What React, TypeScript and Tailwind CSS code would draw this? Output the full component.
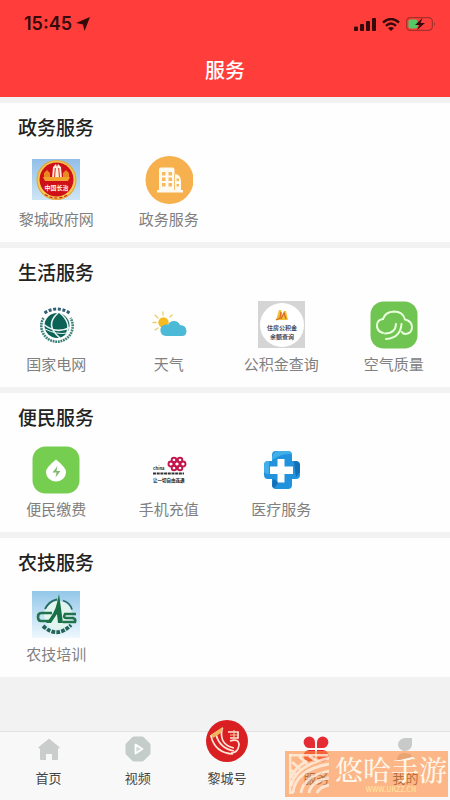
import type { ReactNode } from "react";

type Service = {
  name: string;
  icon: ReactNode;
};

type ServiceGroup = {
  title: string;
  services: Service[];
};

type Tab = {
  name: string;
  icon: ReactNode;
};

function SealIcon() {
  return (
    <svg viewBox="0 0 48 48" className="size-12" aria-hidden="true">
      <defs>
        <linearGradient id="sealSky" x1="0" y1="0" x2="0" y2="1">
          <stop offset="0" stopColor="#92bfe8" />
          <stop offset="1" stopColor="#cde5f6" />
        </linearGradient>
      </defs>
      <rect y="3" width="48" height="41" fill="url(#sealSky)" />
      <circle cx="24.500" cy="24" r="20" fill="#e8a63c" />
      <circle cx="24.500" cy="24" r="18.800" fill="#f5cf52" />
      <circle cx="24.500" cy="23.500" r="17" fill="#cf1018" />
      <path d="M12 22v-5l3-3 3 3v5zM31 22v-5l3-3 3 3v5z" fill="#e98a20" />
      <path d="M20 23l1-12 3-3 1 3 1-3 3 3 1 12z" fill="#fff0dc" />
      <path d="M22.500 22l.8-10M27.500 22l-.8-10" stroke="#d62a20" strokeWidth="1" />
      <path d="M11 21h27l-2 4H13z" fill="#f3a22d" />
      <text x="24.500" y="33.500" fontSize="6" fontWeight="700" textAnchor="middle" fill="#fff3e0">中国长治</text>
      <path d="M13 38.500q11.500 7 23 0" fill="none" stroke="#cf2018" strokeWidth="1.200" strokeDasharray="3 2" />
    </svg>
  );
}

function BuildingIcon() {
  return (
    <svg viewBox="0 0 48 48" className="size-12" aria-hidden="true">
      <circle cx="24.500" cy="24" r="24" fill="#f6b04e" />
      <path d="M14 34V13.500q0-2 2-2h11.500q2 0 2 2V18q6 0 6.500 7v9h2v2.500H12V34z" fill="#fffaf0" />
      <path d="M29.500 18v16" stroke="#f6b04e" strokeWidth=".8" />
      <path d="M17 16h3.500v3.500H17zM23.500 16H27v3.500h-3.500zM17 21.500h3.500V25H17zM23.500 21.500H27V25h-3.500zM17 27h3.500v3.500H17zM23.500 27H27v3.500h-3.500zM31.500 22.500h2.500V25h-2.500zM31.500 28h2.500v2.500h-2.500z" fill="#f6b95f" />
    </svg>
  );
}

function StateGridIcon() {
  return (
    <svg viewBox="0 0 48 48" className="size-12" aria-hidden="true">
      <circle cx="25" cy="24.500" r="12.500" fill="#0d6257" />
      <path d="M11.500 17a15.700 15.700 0 1 0 27 0" fill="none" stroke="#3b7f76" strokeWidth="2.600" strokeDasharray="1.800 .8" />
      <path d="M12.500 12Q25 4 37.500 12" fill="none" stroke="#315f77" strokeWidth="3" strokeDasharray="3 1.700" />
      <path d="M26 12q-14 12 2 25M28 12q12 10 6 22M12 23.500q12 10 26 3" fill="none" stroke="#e7f3ef" strokeWidth="1.600" />
      <path d="M13 28q12 6 22 4" fill="none" stroke="#e7f3ef" strokeWidth="1" />
    </svg>
  );
}

function WeatherIcon() {
  return (
    <svg viewBox="0 0 48 48" className="size-12" aria-hidden="true">
      <path d="M18 11v3M10 14l3 3M27 14l-2 2M8 21.500h3M10 29l3-2" stroke="#e9cf63" strokeWidth="1.300" strokeLinecap="round" />
      <circle cx="18.500" cy="21.500" r="5.200" fill="#f5bb20" />
      <path d="M21 35a5.700 5.700 0 0 1-2-11q2-1 4 0a6.500 6.500 0 0 1 12 0q6 0 6.500 6 0 5-4.500 5z" fill="#4cb9d6" />
    </svg>
  );
}

function FundIcon() {
  return (
    <svg viewBox="0 0 48 48" className="size-12" aria-hidden="true">
      <rect x="1" width="47" height="47" fill="#d5d5d5" />
      <circle cx="25" cy="24" r="22" fill="#fff" />
      <path d="M19 19l3-10h2l2 6 1-5h2l2 9z" fill="#f2c133" />
      <path d="M19 19l4-2 1-6M24 18l3-6 2 6" fill="none" stroke="#d96b2b" strokeWidth="1.300" />
      <text x="25" y="29" fontSize="6" fontWeight="700" textAnchor="middle" fill="#444a5c">住房公积金</text>
      <text x="25" y="38" fontSize="6" fontWeight="700" textAnchor="middle" fill="#444a5c">余额查询</text>
    </svg>
  );
}

function AirIcon() {
  return (
    <svg viewBox="0 0 48 48" className="size-12" aria-hidden="true">
      <rect width="47" height="47" x=".500" y=".500" rx="13" fill="#70c451" />
      <g fill="none" stroke="#eaffdf" strokeWidth="2" strokeLinecap="round">
        <path d="M13 32q-6.500-2-6-8 .500-5.500 6-6 2-7 11-7.500 9 0 11 8 7 1.500 7 8-.500 6-6.500 6.500-2.500 0-3.500-2" />
        <path d="M15 32.500q10.500 0 11-9.500M16 38q14.500-1 15.500-15" />
      </g>
    </svg>
  );
}

function UtilityIcon() {
  return (
    <svg viewBox="0 0 48 48" className="size-12" aria-hidden="true">
      <rect width="47" height="47" x=".500" y=".500" rx="13" fill="#76ce51" />
      <path d="M24 13.500Q34 21.500 34 26a10 9.500 0 0 1-20 0Q14 21.500 24 13.500z" fill="#fff" />
      <path d="M25.500 20l-5 6.500h4l-1 5 5-6.500h-4z" fill="#83b96e" />
    </svg>
  );
}

function UnicomIcon() {
  return (
    <svg viewBox="0 0 48 48" className="size-12" aria-hidden="true">
      <g fill="none" stroke="#c4164e" strokeWidth="1.900">
        <circle cx="26" cy="18" r="2.500" />
        <circle cx="38" cy="18" r="2.500" />
        <circle cx="32" cy="18" r="2.600" />
        <circle cx="29" cy="14" r="2.300" />
        <circle cx="35" cy="14" r="2.300" />
        <circle cx="29" cy="22" r="2.300" />
        <circle cx="35" cy="22" r="2.300" />
      </g>
      <text x="8" y="24" fontSize="4" fontWeight="700" fill="#222">China</text>
      <path d="M8 27.500h31" stroke="#333" strokeWidth="2.200" strokeDasharray="3 .700" />
      <text x="8" y="36" fontSize="4.500" fontWeight="700" fill="#111">让一切自由连通</text>
    </svg>
  );
}

function MedicalIcon() {
  return (
    <svg viewBox="0 0 48 48" className="size-12" aria-hidden="true">
      <path d="M15 15V9q0-4 4-4h12q4 0 4 4v6h4q4 0 4 4v10q0 4-4 4h-4v6q0 4-4 4H19q-4 0-4-4v-6h-4q-4 0-4-4V19q0-4 4-4z" fill="#2292dc" />
      <path d="M15 12q1-7 7-7h9q3 0 3 3-9-1-19 6zM7 20q0-5 5-5v13q-5 0-5-3z" fill="#42afe9" />
      <path d="M37 15q6 0 6 5v6l-4 5zM16 33l6 3-5 6q-2-1-2-3z" fill="#126fb8" />
      <path d="M20.500 13h7v7.500H36v7.500h-8.500v8.500h-7V28H13v-7.500h7.500z" fill="#fff" />
    </svg>
  );
}

function FarmIcon() {
  return (
    <svg viewBox="0 0 48 48" className="size-12" aria-hidden="true">
      <defs>
        <linearGradient id="farmSky" x1="0" y1="0" x2="0" y2="1">
          <stop offset="0" stopColor="#93c7e9" />
          <stop offset="1" stopColor="#eef8fe" />
        </linearGradient>
      </defs>
      <rect width="48" height="47" fill="url(#farmSky)" />
      <circle cx="26" cy="24" r="14" fill="#e1f4ee" />
      <path d="M13 18q4-8 12-9.500M31 9.500q7 2 9 9" fill="none" stroke="#276b67" strokeWidth="1.800" />
      <path d="M27 3l4 29h-5l-1-9-6 9h-5q9-10 11-20z" fill="#187047" />
      <path d="M20 22H9q-3 0-3 4t3 4h8M44 23H33q-2 4 1 4h7q3 1 2 4H31" fill="none" stroke="#20734c" strokeWidth="2.600" />
      <path d="M11 35Q25 48 39 34" fill="none" stroke="#246456" strokeWidth="3.800" strokeDasharray="3.800 1.200" />
    </svg>
  );
}

function HomeIcon() {
  return (
    <svg viewBox="0 0 26 26" className="size-6.5" aria-hidden="true">
      <path d="M12.200 3.200q.8-.7 1.600 0l9.500 7.800q1 1.500-1 1.500H22V23q0 1-1 1h-5v-6h-6v6H5q-1 0-1-1V12.500h-.300q-2 0-1-1.500z" fill="#cbcccc" />
    </svg>
  );
}

function VideoIcon() {
  return (
    <svg viewBox="0 0 26 26" className="size-6.5" aria-hidden="true">
      <path d="M9 3h8l6 6v8l-6 6H9l-6-6V9z" fill="#c4cdca" stroke="#c4cdca" strokeWidth="5" strokeLinejoin="round" />
      <path d="M10.500 8.500l7 4.500-7 4.500z" fill="#d3dbd8" stroke="#fff" strokeWidth="1.700" strokeLinejoin="round" />
    </svg>
  );
}

function LichengIcon() {
  return (
    <svg viewBox="0 0 42 42" className="size-10.5" aria-hidden="true">
      <circle cx="21" cy="21" r="21" fill="#da1f23" />
      <g fill="none" stroke="#ffe5d5" strokeWidth="1.700">
        <path d="M17 8L5 16q4 17 22 18M10 14q3 14 18 17M16 9q-3 16 12 19" />
        <path d="M22 12h10v6h-8M24 21q9-3 9 4-1 8-8 8" />
      </g>
      <path d="M17 7L5 15l2 3 8-5z" fill="#edb65d" />
      <path d="M24 15h7M28 10v8" stroke="#f6c795" strokeWidth="1.200" />
    </svg>
  );
}

function CloverIcon() {
  return (
    <svg viewBox="0 0 26 26" className="size-6.5" aria-hidden="true">
      <path d="M12 12H6.500A5.700 5.700 0 1 1 12 6.500zM14 12V6.500A5.700 5.700 0 1 1 19.500 12zM12 14v5.500A5.700 5.700 0 1 1 6.500 14zM14 14h5.500a5.700 5.700 0 1 1-5.500 5.500z" fill="#e52b34" />
    </svg>
  );
}

function PersonIcon() {
  return (
    <svg viewBox="0 0 26 26" className="size-6.5" aria-hidden="true">
      <path d="M13 2h7v6.500a7 6.500 0 1 1-7-6.500z" fill="#c8cac9" />
      <path d="M5 24q0-7 8-7t8 7z" fill="#c8cac9" />
    </svg>
  );
}

const groups: ServiceGroup[] = [
  {
    title: "政务服务",
    services: [
      { name: "黎城政府网", icon: <SealIcon /> },
      { name: "政务服务", icon: <BuildingIcon /> },
    ],
  },
  {
    title: "生活服务",
    services: [
      { name: "国家电网", icon: <StateGridIcon /> },
      { name: "天气", icon: <WeatherIcon /> },
      { name: "公积金查询", icon: <FundIcon /> },
      { name: "空气质量", icon: <AirIcon /> },
    ],
  },
  {
    title: "便民服务",
    services: [
      { name: "便民缴费", icon: <UtilityIcon /> },
      { name: "手机充值", icon: <UnicomIcon /> },
      { name: "医疗服务", icon: <MedicalIcon /> },
    ],
  },
  {
    title: "农技服务",
    services: [{ name: "农技培训", icon: <FarmIcon /> }],
  },
];

const tabs: Tab[] = [
  { name: "首页", icon: <HomeIcon /> },
  { name: "视频", icon: <VideoIcon /> },
  { name: "黎城号", icon: <LichengIcon /> },
  { name: "服务", icon: <CloverIcon /> },
  { name: "我的", icon: <PersonIcon /> },
];

function StatusBar() {
  return (
    <div className="flex h-12 items-center justify-between pr-3.5 pl-6 text-[#350a0b]">
      <div className="flex items-center gap-1">
        <span className="font-[Inter,sans-serif] text-lg font-semibold">15:45</span>
        <svg viewBox="0 0 14 14" className="size-3.5" aria-hidden="true">
          <path d="M14 0L8.500 14 7 7.500 0 6z" fill="currentColor" />
        </svg>
      </div>
      <div className="flex items-center gap-1.5">
        <svg viewBox="0 0 22 13" className="h-[13px] w-[22px]" fill="currentColor" aria-hidden="true">
          <rect x="0" y="8.500" width="4" height="4.500" rx="1" />
          <rect x="6" y="6" width="4" height="7" rx="1" />
          <rect x="12" y="3" width="4" height="10" rx="1" />
          <rect x="18" y="0" width="4" height="13" rx="1" />
        </svg>
        <svg viewBox="0 0 18 13" className="h-[13px] w-[18px]" aria-hidden="true">
          <path d="M1 4.500q8-7 16 0M4 7.800q5-4.500 10 0" fill="none" stroke="currentColor" strokeWidth="2.400" />
          <path d="M6 10.200q3-2.400 6 0L9 13z" fill="currentColor" />
        </svg>
        <svg viewBox="0 0 30 14" className="h-3.5 w-[30px]" aria-hidden="true">
          <rect x=".6" y=".6" width="25.800" height="12.800" rx="4" fill="none" stroke="#a7302b" strokeWidth="1.200" />
          <rect x="2.500" y="2.500" width="9" height="9" rx="2" fill="#55c765" />
          <path d="M28 5q2 2 0 4z" fill="#a7302b" />
          <path d="M16.500 1L9 8h4.500L11 13l8-7h-4.500z" fill="currentColor" />
        </svg>
      </div>
    </div>
  );
}

function ServiceSection({ group }: { group: ServiceGroup }) {
  return (
    <section className="mt-1.5 bg-[#fefefe] pt-3 pb-3">
      <h2 className="px-[18px] text-[19px] leading-6 font-medium text-[#222]">
        {group.title}
      </h2>
      <ul className="mt-[17px] grid grid-cols-4">
        {group.services.map((service) => (
          <li key={service.name}>
            <a href="#" className="flex flex-col items-center gap-1">
              {service.icon}
              <span className="text-[15px] leading-[22px] text-[#808080]">
                {service.name}
              </span>
            </a>
          </li>
        ))}
      </ul>
    </section>
  );
}

function Watermark() {
  return (
    <div className="pointer-events-none absolute right-0.5 bottom-[3px] flex h-[46px] w-[163px] items-center gap-1.5 bg-[#ff8a3c]/60 pl-1">
      <svg viewBox="0 0 40 40" className="size-10 shrink-0" aria-hidden="true">
        <g fill="none" stroke="#fff4e8" strokeWidth="2.800" strokeOpacity=".75">
          <path d="M1 0v39h3" />
          <path d="M0 1h39" />
          <path d="M4 39Q6 16 40 10M12 39q2-17 28-22M20 39q2-12 20-15M28 39q2-6 12-8" />
          <path d="M2 32Q7 11 40 4M2 24Q5 14 18 7M3 8l8 7M10 2l8 8M20 2l8 5M2 16l5 5" />
        </g>
      </svg>
      <div className="flex flex-col items-center text-[#fff6ea]">
        <span className="font-['Noto_Serif_CJK_SC','Noto_Sans_CJK_SC',serif] text-[28px] leading-[30px] font-medium whitespace-nowrap">
          悠哈手游
        </span>
        <span className="text-[7px] leading-[10px] font-medium text-[#ffe29c]">WWW.UKZZ.CN</span>
      </div>
    </div>
  );
}

export default function App() {
  return (
    <div className="flex min-h-screen flex-col bg-[#f2f2f2] font-['Noto_Sans_CJK_SC',sans-serif]">
      <header className="bg-[#ff3e3b] pb-3">
        <StatusBar />
        <h1 className="pt-1.5 text-center text-xl leading-[31px] font-medium text-white">服务</h1>
      </header>
      <main className="flex-1">
        {groups.map((group) => (
          <ServiceSection key={group.title} group={group} />
        ))}
      </main>
      <nav className="relative border-t border-[#e1e1e1] bg-[#f8f8f8]">
        <ul className="grid grid-cols-5 items-end pb-3 pl-1">
          {tabs.map((tab) => (
            <li key={tab.name}>
              <a href="#" className="-mt-3 flex flex-col items-center gap-1.5">
                {tab.icon}
                <span className="text-[13px] leading-5 text-[#444]">{tab.name}</span>
              </a>
            </li>
          ))}
        </ul>
        <Watermark />
      </nav>
    </div>
  );
}
